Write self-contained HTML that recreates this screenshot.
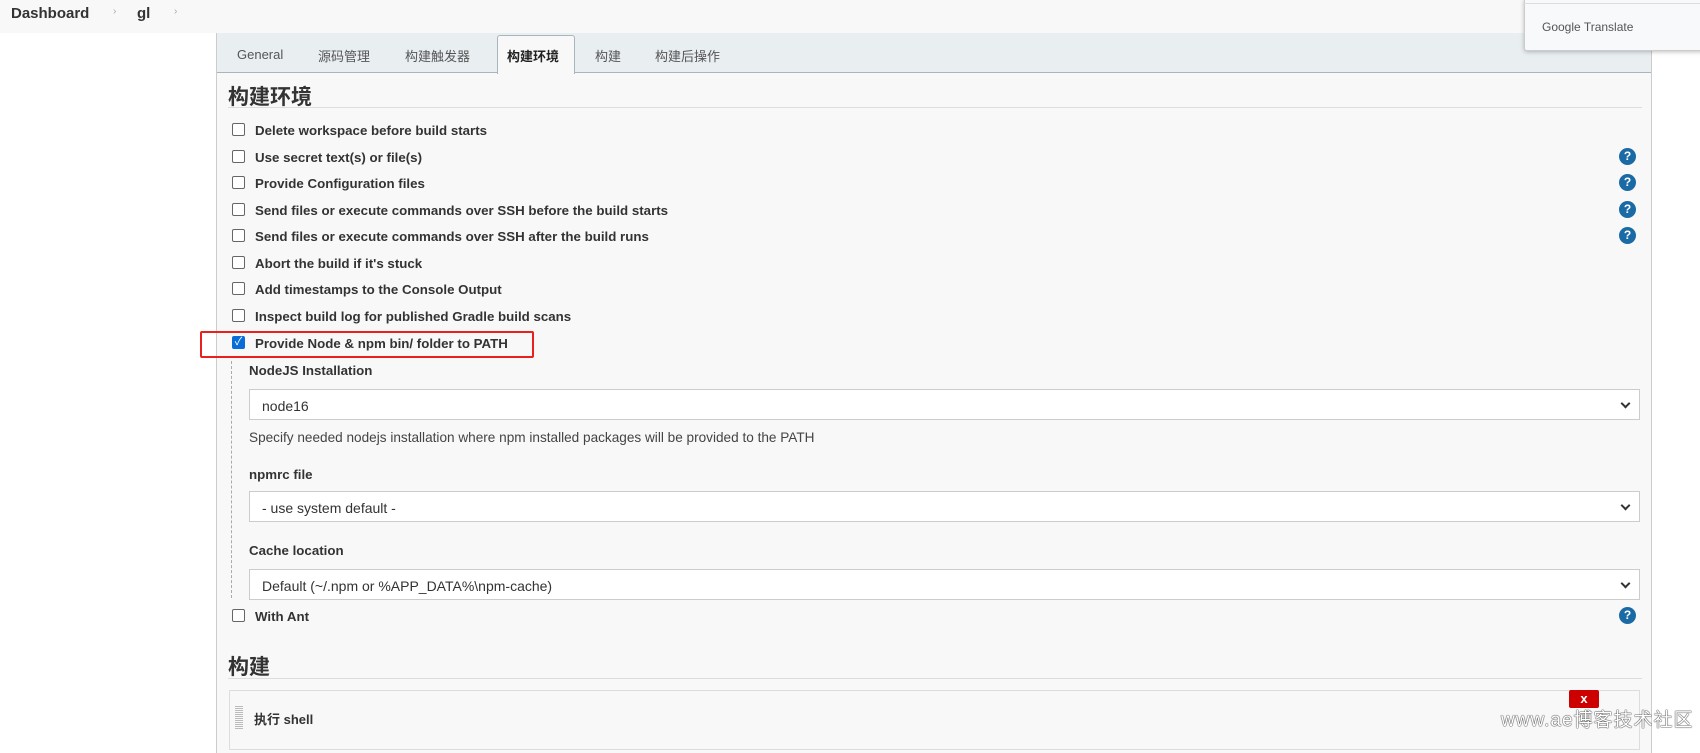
<!DOCTYPE html>
<html><head><meta charset="utf-8"><style>
*{box-sizing:border-box;margin:0;padding:0}
body{width:1700px;height:738px;overflow:hidden;background:#fff;font-family:"Liberation Sans","Noto Sans CJK SC",sans-serif;color:#333;position:relative}
.a{position:absolute}
.crumb{top:0;left:0;width:1700px;height:33px;background:#f8f8f8}
.panel{left:216px;top:33px;width:1436px;height:720px;background:#f8f8f8;border-left:1px solid #ccc;border-right:1px solid #ccc}
.tabbar{left:217px;top:33px;width:1434px;height:40px;background:#e9eef1;border-bottom:1px solid #a8b5bd}
.tab{top:46px;font-size:13px;color:#555}
.cb{left:232px;width:13px;height:13px;border:1px solid #666;border-radius:2px;background:#fff}
.lbl{left:255px;font-size:13.3px;font-weight:bold;color:#333}
.help{left:1619px;width:17px;height:17px;border-radius:50%;background:#1a6aa6;color:#fff;font-size:12px;font-weight:bold;text-align:center;line-height:17px}
.sel{left:249px;width:1391px;height:31px;background:#fff;border:1px solid #ccc;font-size:14px;padding:8px 12px;color:#333}
.sel:after{content:"";position:absolute;right:10px;top:10px;width:5px;height:5px;border-right:2px solid #333;border-bottom:2px solid #333;transform:rotate(45deg)}
.fl{left:249px;font-size:13.3px;font-weight:bold}
</style></head><body>
<div class="a crumb"></div>
<div class="a" style="left:11px;top:5px;font-size:15px;font-weight:bold;color:#333">Dashboard</div>
<div class="a" style="left:113px;top:6px;font-size:10px;color:#aaa">›</div>
<div class="a" style="left:137px;top:5px;font-size:15px;font-weight:bold;color:#333">gl</div>
<div class="a" style="left:174px;top:6px;font-size:10px;color:#aaa">›</div>
<div class="a panel"></div>
<div class="a tabbar"></div>
<div class="a" style="left:497px;top:35px;width:78px;height:39px;background:#f8f8f8;border:1px solid #a8b5bd;border-bottom:none;border-radius:3px 3px 0 0"></div>
<div class="a tab" style="left:237px;top:47px">General</div>
<div class="a tab" style="left:318px">源码管理</div>
<div class="a tab" style="left:405px">构建触发器</div>
<div class="a tab" style="left:507px;color:#222;font-weight:bold">构建环境</div>
<div class="a tab" style="left:595px">构建</div>
<div class="a tab" style="left:655px">构建后操作</div>
<div class="a" style="left:228px;top:81px;font-size:21px;font-weight:bold;color:#333">构建环境</div>
<div class="a" style="left:228px;top:107px;width:1414px;height:1px;background:#ddd"></div>

<div class="a cb" style="top:123px"></div><div class="a lbl" style="top:123px">Delete workspace before build starts</div>
<div class="a cb" style="top:150px"></div><div class="a lbl" style="top:150px">Use secret text(s) or file(s)</div><div class="a help" style="top:148px">?</div>
<div class="a cb" style="top:176px"></div><div class="a lbl" style="top:176px">Provide Configuration files</div><div class="a help" style="top:174px">?</div>
<div class="a cb" style="top:203px"></div><div class="a lbl" style="top:203px">Send files or execute commands over SSH before the build starts</div><div class="a help" style="top:201px">?</div>
<div class="a cb" style="top:229px"></div><div class="a lbl" style="top:229px">Send files or execute commands over SSH after the build runs</div><div class="a help" style="top:227px">?</div>
<div class="a cb" style="top:256px"></div><div class="a lbl" style="top:256px">Abort the build if it's stuck</div>
<div class="a cb" style="top:282px"></div><div class="a lbl" style="top:282px">Add timestamps to the Console Output</div>
<div class="a cb" style="top:309px"></div><div class="a lbl" style="top:309px">Inspect build log for published Gradle build scans</div>
<div class="a cb" style="top:336px;background:#0a6cd6;border-color:#0a6cd6;color:#fff;font-size:11px;line-height:11px;text-align:center">✓</div><div class="a lbl" style="top:336px">Provide Node &amp; npm bin/ folder to PATH</div>
<div class="a" style="left:200px;top:331px;width:334px;height:27px;border:2px solid #e8201e;border-radius:2px"></div>
<div class="a" style="left:231px;top:361px;height:237px;border-left:1px dashed #aaa"></div>
<div class="a fl" style="top:363px">NodeJS Installation</div>
<div class="a sel" style="top:389px">node16</div>
<div class="a" style="left:249px;top:430px;font-size:13.6px;color:#444">Specify needed nodejs installation where npm installed packages will be provided to the PATH</div>
<div class="a fl" style="top:467px">npmrc file</div>
<div class="a sel" style="top:491px">- use system default -</div>
<div class="a fl" style="top:543px">Cache location</div>
<div class="a sel" style="top:569px">Default (~/.npm or %APP_DATA%\npm-cache)</div>
<div class="a cb" style="top:609px"></div><div class="a lbl" style="top:609px">With Ant</div><div class="a help" style="top:607px">?</div>
<div class="a" style="left:228px;top:651px;font-size:21px;font-weight:bold;color:#333">构建</div>
<div class="a" style="left:228px;top:678px;width:1414px;height:1px;background:#ddd"></div>
<div class="a" style="left:229px;top:690px;width:1411px;height:60px;border:1px solid #ddd;background:#f8f8f8"></div>
<div class="a" style="left:235px;top:705px;width:8px;height:25px;background:repeating-linear-gradient(#f8f8f8 0 1px,#bbb 1px 2px)"></div>
<div class="a" style="left:254px;top:709px;font-size:13px;font-weight:bold">执行 shell</div>
<div class="a" style="left:1569px;top:690px;width:30px;height:18px;background:#c00;color:#fff;font-size:13px;font-weight:bold;text-align:center;line-height:18px;border-radius:2px">x</div>
<div class="a" style="left:1501px;top:705px;font-size:19px;color:#fff;letter-spacing:1px;text-shadow:0 0 1px #000,0 0 1px #000">www.ae博客技术社区</div>
<div class="a" style="left:1524px;top:-2px;width:180px;height:53px;background:#f8f9fa;border:1px solid #ccc;border-radius:3px;box-shadow:0 1px 4px rgba(0,0,0,.25)"></div>
<div class="a" style="left:1524px;top:3px;width:180px;height:1px;background:#ddd"></div>
<div class="a" style="left:1542px;top:20px;font-size:12px;color:#555">Google Translate</div>
</body></html>
